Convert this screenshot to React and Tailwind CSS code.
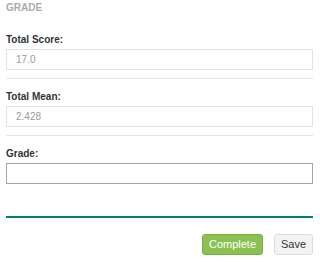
import React from "react";

function Field({ label, value, strong }) {
  return (
    <div className="pt-[12px]">
      <div className="text-[10px] leading-[12px] font-bold text-[#333333]">{label}</div>
      <div
        className={
          "mt-[3px] h-[21px] border bg-white px-[9px] text-[10px] leading-[19px] text-[#9a9a9a] " +
          (strong ? "border-[#a6a6a6]" : "border-[#e3e3e3]")
        }
      >
        {value}
      </div>
    </div>
  );
}

export default function App() {
  return (
    <div
      className="w-[318px] h-[262px] bg-white pl-[6px] pr-[5px]"
      style={{ fontFamily: '"Liberation Sans", Arial, sans-serif' }}
    >
      <div className="pt-[2px] text-[10px] leading-[12px] font-bold text-[#ababab]">GRADE</div>
      <div className="pt-[8px]">
        <Field label="Total Score:" value="17.0" />
      </div>
      <div className="mt-[8px] h-px bg-[#e5e5e5]" />
      <Field label="Total Mean:" value="2.428" />
      <div className="mt-[8px] h-px bg-[#e5e5e5]" />
      <Field label="Grade:" value="" strong />
      <div className="mt-[32px] h-[2px] bg-[#00806a]" />
      <div className="mt-[16px] flex justify-end gap-[11px]">
        <button className="h-[21px] w-[61px] rounded-[3px] border border-[#7aae45] bg-[#8cc152] text-[11px] text-white">
          Complete
        </button>
        <button className="h-[21px] w-[39px] rounded-[3px] border border-[#dcdcdc] bg-[#f3f3f3] text-[11px] text-[#333333]">
          Save
        </button>
      </div>
    </div>
  );
}
